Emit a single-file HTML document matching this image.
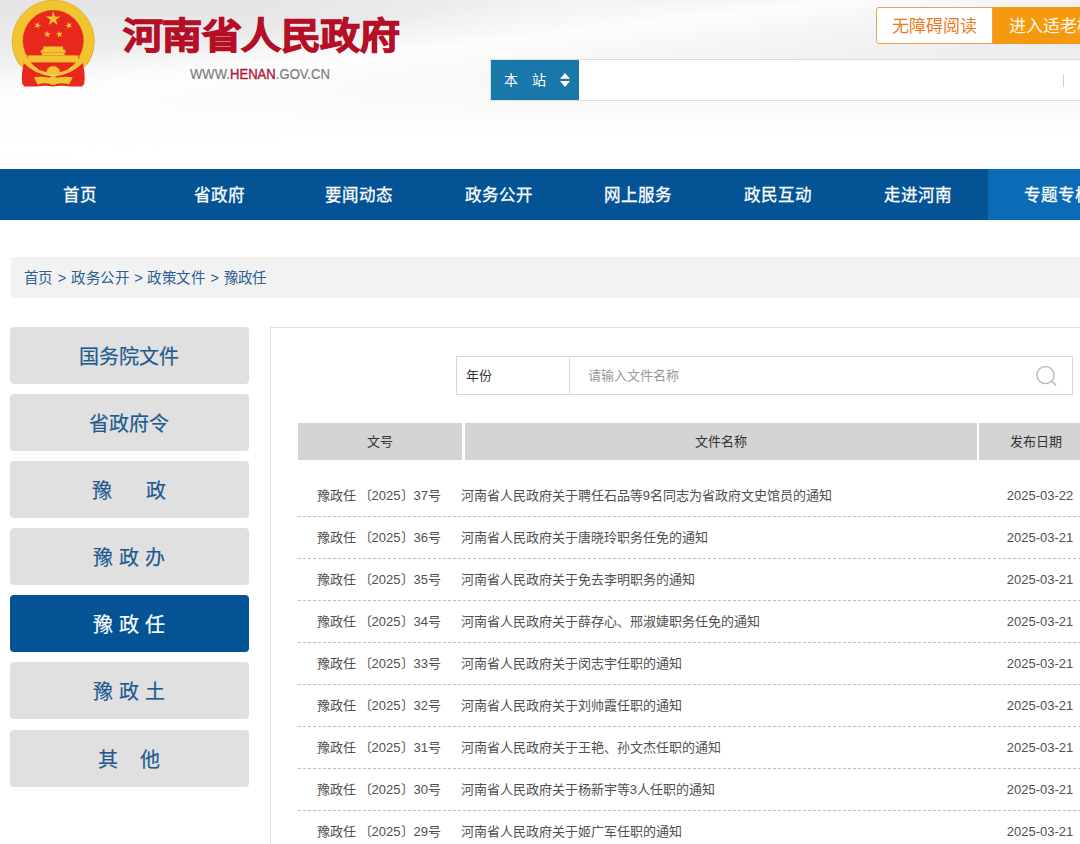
<!DOCTYPE html>
<html lang="zh-CN">
<head>
<meta charset="utf-8">
<title>河南省人民政府</title>
<style>
*{margin:0;padding:0;box-sizing:border-box}
html,body{width:1080px;height:844px;overflow:hidden;background:#fff}
body{position:relative;font-family:"Liberation Sans",sans-serif;color:#333}
.abs{position:absolute}
#hdr{left:0;top:0;width:1080px;height:169.4px;background:linear-gradient(173.25deg,rgba(255,255,255,0) 60px,rgba(255,255,255,0.9) 100px,rgba(255,255,255,0.5) 130px,rgba(255,255,255,0) 170px),radial-gradient(ellipse 320px 45px at 560px 0px,rgba(255,255,255,0.5),rgba(255,255,255,0)),linear-gradient(180deg,#e4e4e4 0px,#eaeaea 35px,#f1f1f1 70px,#f8f8f8 100px,#fdfdfd 120px,#fff 140px);overflow:hidden}
#title{left:122.5px;top:8.3px;font-size:40px;line-height:56px;font-weight:bold;color:#b50f27;white-space:nowrap;-webkit-text-stroke:1.3px #b50f27;letter-spacing:-0.5px;transform:scaleY(0.91);transform-origin:0 27.6px}
#www{left:190px;top:64.6px;font-size:14px;line-height:18px;color:#7c7c7c;white-space:nowrap;transform:scaleX(0.935);transform-origin:0 0;-webkit-text-stroke:0.2px #7c7c7c}
#www b{font-weight:normal;color:#b3173a;-webkit-text-stroke:0.4px #b3173a}
#btn1{left:876.3px;top:7.2px;width:116.5px;height:37.3px;border:1px solid #f0a050;border-radius:3px 0 0 3px;background:#fff;color:#ec7a1c;font-size:17px;line-height:37px;text-align:center;white-space:nowrap}
#btn2{left:992.8px;top:7.2px;width:120px;height:37.3px;background:#f59a0e;color:#fffaf0;font-size:17px;line-height:40.6px;padding-left:16px;white-space:nowrap}
#sbox{left:490px;top:59.2px;width:700px;height:41.6px;border:1px solid #dcdcdc;background:#fff}
#ssel{left:490.5px;top:60.4px;width:88.5px;height:39.2px;background:#1a77aa;color:#fff;font-size:14px;line-height:41px;white-space:nowrap}
#nav{left:0;top:169.4px;width:1080px;height:50.3px;background:#035395}
.ni{position:absolute;top:0;width:139.8px;height:50.3px;line-height:52px;text-align:center;color:#fff;font-size:16.5px;white-space:nowrap;-webkit-text-stroke:0.3px #fff}
#crumb{left:10.6px;top:257.2px;width:1080px;height:41px;background:#f2f2f2;border-radius:3px 0 0 3px}
.cw,.cs{position:absolute;top:257.3px;height:41px;line-height:43px;font-size:14.5px;color:#2c5f93;white-space:nowrap}
.sb{position:absolute;left:10px;width:238.5px;height:57.3px;border-radius:4px;background:#e0e0e0;color:#225a90;-webkit-text-stroke:0.2px #225a90;font-size:20px;line-height:61px;text-align:center;white-space:nowrap}
.sb.on{background:#035395;color:#fff;-webkit-text-stroke:0.2px #fff}
#panel{left:269.6px;top:327.2px;width:900px;height:600px;border:1px solid #dedede;background:#fff}
#year{left:456.3px;top:356.3px;width:113.4px;height:38.6px;border:1px solid #d8d8d8;font-size:13px;line-height:37.6px;color:#333;padding-left:9px}
#kw{left:569.2px;top:356.3px;width:503.8px;height:38.6px;border:1px solid #d8d8d8;border-left:none;font-size:13px;line-height:36.2px;color:#999;padding-left:19px;line-height:37.2px}
.th{position:absolute;top:423px;height:36.7px;background:#d4d4d4;font-size:13px;line-height:38.7px;text-align:center;color:#333;white-space:nowrap}
.row{position:absolute;left:297.8px;width:800px;height:42px;font-size:13px;color:#505050;white-space:nowrap}
.row .dl{position:absolute;left:0;bottom:0;width:100%;height:1px;background:repeating-linear-gradient(90deg,#bdbdbd 0 3px,transparent 3px 5px)}
.row span{position:absolute;top:0;line-height:42px}
.c1{left:19px}.c2{left:163px}.c3{left:709px}
</style>
</head>
<body>
<div id="hdr" class="abs">
  <svg class="abs" style="left:10px;top:0" width="90" height="90" viewBox="10 0 90 90">
<path d="M21.15,67 A41 41 0 1 1 85.35,67 Z" fill="#f3c431"/>
<path d="M19.5,64.5 A41 41 0 1 1 87,64.5" fill="none" stroke="#e3a823" stroke-width="0.9"/>
<circle cx="53.2" cy="40.6" r="30.9" fill="#e3a823"/>
<circle cx="53.2" cy="40.6" r="30.3" fill="#e8281d"/>
<path d="M26.5,57 Q38,74 53.2,74.5 Q68.4,74 79.9,57 Z" fill="#e8281d"/>
<polygon fill="#f3c431" points="53.20,11.30 54.91,16.55 60.43,16.55 55.96,19.80 57.67,25.05 53.20,21.80 48.73,25.05 50.44,19.80 45.97,16.55 51.49,16.55"/>
<polygon fill="#f3c431" points="38.64,21.88 38.64,24.57 41.20,25.40 38.64,26.23 38.64,28.92 37.06,26.74 34.51,27.57 36.09,25.40 34.51,23.23 37.06,24.06"/>
<polygon fill="#f3c431" points="67.76,21.88 69.34,24.06 71.89,23.23 70.31,25.40 71.89,27.57 69.34,26.74 67.76,28.92 67.76,26.23 65.20,25.40 67.76,24.57"/>
<polygon fill="#f3c431" points="47.94,30.66 48.32,33.32 50.96,33.79 48.55,34.96 48.92,37.63 47.05,35.69 44.64,36.87 45.90,34.50 44.03,32.56 46.68,33.03"/>
<polygon fill="#f3c431" points="58.76,30.66 60.02,33.03 62.67,32.56 60.80,34.50 62.06,36.87 59.65,35.69 57.78,37.63 58.15,34.96 55.74,33.79 58.38,33.32"/>
<path fill="#f3c431" d="M43.3,46.5 H63.1 V49.4 H64.6 L66.3,52.5 H40.1 L41.8,49.4 H43.3 Z"/>
<rect fill="#f3c431" x="41.8" y="52.5" width="22.8" height="2.9"/>
<rect fill="#f3c431" x="27.6" y="55.4" width="50.7" height="7"/>
<path fill="#e8281d" d="M24,62 C22,70 21.3,78 22.3,84 L24.5,86.6 L36.5,86.6 Q45,84.8 53.2,86.6 Q61.5,84.8 70,86.6 L82,86.6 L84.2,84 C85.2,78 84.6,70 82.6,62 Q70,75.5 53.2,76.3 Q36.5,75.5 24,62 Z"/>
<path fill="none" stroke="#f3c431" stroke-width="3" d="M24.4,61.6 Q37,74.3 53.2,74.1 Q69.5,74.3 82.1,61.6"/>
<polygon fill="#f3c431" points="46.90,73.00 45.68,71.92 47.16,71.23 46.29,69.84 47.90,69.59 47.46,68.02 49.07,68.24 49.09,66.61 50.58,67.27 51.06,65.71 52.30,66.76 53.20,65.40 54.10,66.76 55.34,65.71 55.82,67.27 57.31,66.61 57.33,68.24 58.94,68.02 58.50,69.59 60.11,69.84 59.24,71.23 60.72,71.92 59.50,73.00"/>
<path fill="#f3c431" d="M33.9,77.3 Q44,75.8 53.2,78.8 Q62.5,75.8 72.8,77.3 L69,84.6 Q61,81.8 53.2,84.8 Q45.5,81.8 37.6,84.6 Z"/>
<circle cx="53.2" cy="80.5" r="4.6" fill="#f3c431"/>
</svg>
  <div id="title" class="abs">河南省人民政府</div>
  <div id="www" class="abs">WWW.<b>HENAN</b>.GOV.CN</div>
  <div id="btn1" class="abs">无障碍阅读</div>
  <div id="btn2" class="abs">进入适老模式</div>
  <div id="sbox" class="abs"></div>
  <div class="abs" style="left:1063px;top:74.4px;width:1px;height:12.2px;background:#d0d0d0"></div>
  <div id="ssel" class="abs"><span style="position:absolute;left:13px">本</span><span style="position:absolute;left:41px">站</span><svg style="position:absolute;left:69.6px;top:12.6px" width="10" height="14" viewBox="0 0 10 14"><path d="M5,0 L10,5.7 H0 Z M0,8 H10 L5,14 Z" fill="#fff"/></svg></div>
</div>
<div id="nav" class="abs">
  <div class="ni" style="left:9.75px">首页</div>
  <div class="ni" style="left:149.45px">省政府</div>
  <div class="ni" style="left:289.15px">要闻动态</div>
  <div class="ni" style="left:428.85px">政务公开</div>
  <div class="ni" style="left:568.55px">网上服务</div>
  <div class="ni" style="left:708.25px">政民互动</div>
  <div class="ni" style="left:847.95px">走进河南</div>
  <div class="ni" style="left:987.65px;background:#0b6bb6">专题专栏</div>
</div>
<div id="crumb" class="abs"></div>
<div class="cw" style="left:24px">首页</div><div class="cs" style="left:57.8px">&gt;</div>
<div class="cw" style="left:71px;letter-spacing:0.55px">政务公开</div><div class="cs" style="left:134.3px">&gt;</div>
<div class="cw" style="left:147.4px;letter-spacing:0.55px">政策文件</div><div class="cs" style="left:210.6px">&gt;</div>
<div class="cw" style="left:223.7px">豫政任</div>

<div class="sb" style="top:327.1px">国务院文件</div>
<div class="sb" style="top:394.2px">省政府令</div>
<div class="sb" style="top:461.2px;letter-spacing:34.3px;text-indent:34.3px">豫政</div>
<div class="sb" style="top:528px;letter-spacing:6px;text-indent:6px">豫政办</div>
<div class="sb on" style="top:595px;letter-spacing:6px;text-indent:6px">豫政任</div>
<div class="sb" style="top:662px;letter-spacing:6px;text-indent:6px">豫政土</div>
<div class="sb" style="top:729.8px;letter-spacing:22.3px;text-indent:22.3px">其他</div>

<div id="panel" class="abs"></div>
<div id="year" class="abs">年份</div>
<div id="kw" class="abs">请输入文件名称</div>
<svg class="abs" style="left:1035px;top:365px" width="23" height="22" viewBox="1035 365 23 22"><circle cx="1045.5" cy="375" r="8.6" fill="none" stroke="#bdbdbd" stroke-width="1.5"/><path d="M1051.6,381.1 L1055.6,384.9" stroke="#bdbdbd" stroke-width="1.6" stroke-linecap="round"/></svg>
<div class="th" style="left:297.8px;width:163.9px">文号</div>
<div class="th" style="left:464.7px;width:512px">文件名称</div>
<div class="th" style="left:979.2px;width:114.4px">发布日期</div>

<div class="row" style="top:474.5px"><span class="c1">豫政任<i style="display:inline-block;width:2.8px"></i>〔2025〕37号</span><span class="c2">河南省人民政府关于聘任石品等9名同志为省政府文史馆员的通知</span><span class="c3">2025-03-22</span><div class="dl"></div></div>
<div class="row" style="top:516.5px"><span class="c1">豫政任<i style="display:inline-block;width:2.8px"></i>〔2025〕36号</span><span class="c2">河南省人民政府关于唐晓玲职务任免的通知</span><span class="c3">2025-03-21</span><div class="dl"></div></div>
<div class="row" style="top:558.5px"><span class="c1">豫政任<i style="display:inline-block;width:2.8px"></i>〔2025〕35号</span><span class="c2">河南省人民政府关于免去李明职务的通知</span><span class="c3">2025-03-21</span><div class="dl"></div></div>
<div class="row" style="top:600.5px"><span class="c1">豫政任<i style="display:inline-block;width:2.8px"></i>〔2025〕34号</span><span class="c2">河南省人民政府关于薛存心、邢淑婕职务任免的通知</span><span class="c3">2025-03-21</span><div class="dl"></div></div>
<div class="row" style="top:642.5px"><span class="c1">豫政任<i style="display:inline-block;width:2.8px"></i>〔2025〕33号</span><span class="c2">河南省人民政府关于闵志宇任职的通知</span><span class="c3">2025-03-21</span><div class="dl"></div></div>
<div class="row" style="top:684.5px"><span class="c1">豫政任<i style="display:inline-block;width:2.8px"></i>〔2025〕32号</span><span class="c2">河南省人民政府关于刘帅霞任职的通知</span><span class="c3">2025-03-21</span><div class="dl"></div></div>
<div class="row" style="top:726.5px"><span class="c1">豫政任<i style="display:inline-block;width:2.8px"></i>〔2025〕31号</span><span class="c2">河南省人民政府关于王艳、孙文杰任职的通知</span><span class="c3">2025-03-21</span><div class="dl"></div></div>
<div class="row" style="top:768.5px"><span class="c1">豫政任<i style="display:inline-block;width:2.8px"></i>〔2025〕30号</span><span class="c2">河南省人民政府关于杨新宇等3人任职的通知</span><span class="c3">2025-03-21</span><div class="dl"></div></div>
<div class="row" style="top:810.5px"><span class="c1">豫政任<i style="display:inline-block;width:2.8px"></i>〔2025〕29号</span><span class="c2">河南省人民政府关于姬广军任职的通知</span><span class="c3">2025-03-21</span><div class="dl"></div></div>
</body>
</html>
